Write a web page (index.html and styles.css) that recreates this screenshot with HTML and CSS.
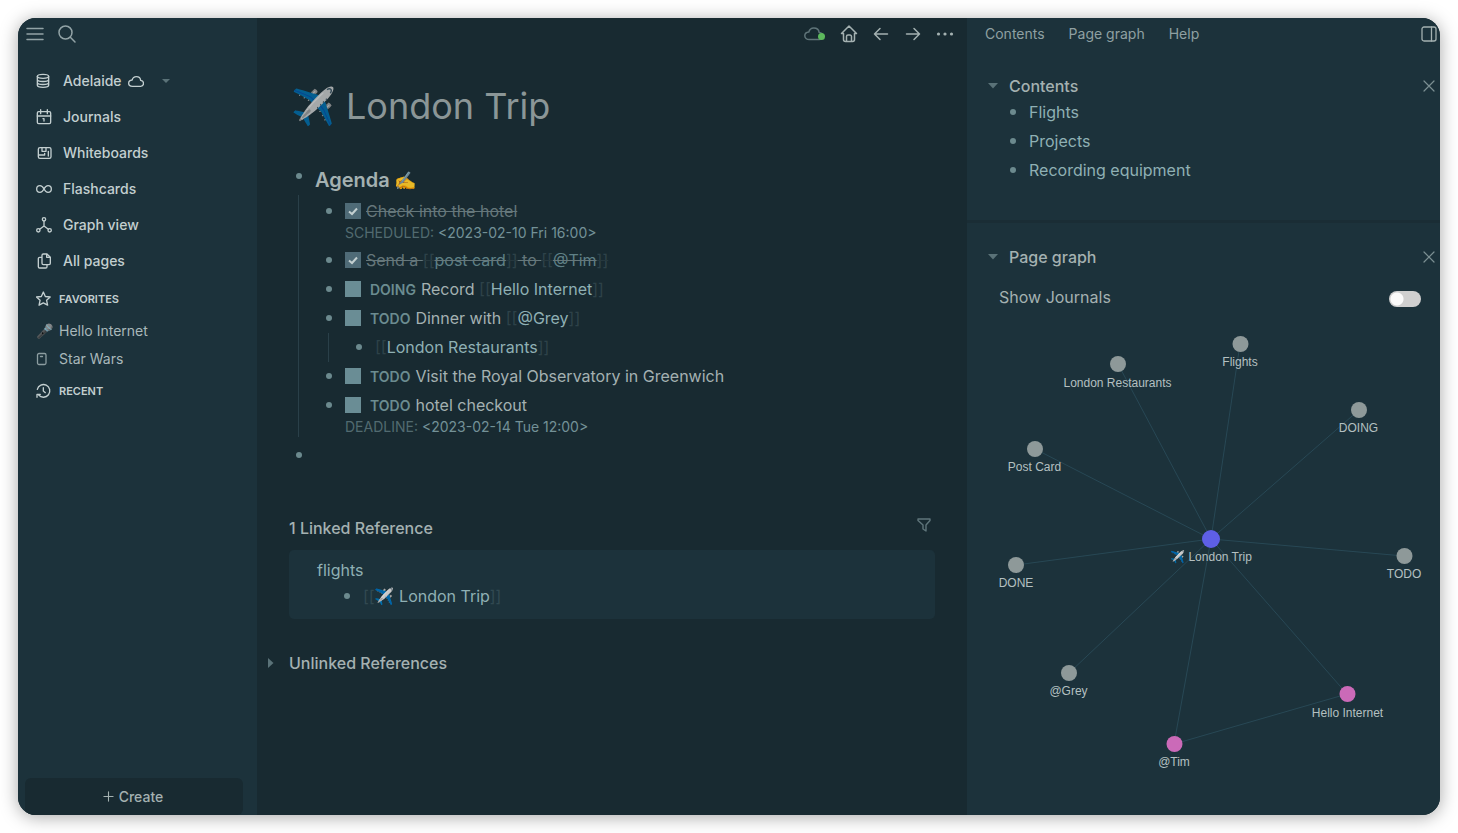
FILE: index.html
```html
<!DOCTYPE html>
<html lang="en">
<head>
<meta charset="utf-8">
<title>London Trip</title>
<meta name="viewport" content="width=device-width, initial-scale=1">
<link rel="stylesheet" href="styles.css">
</head>
<body>
<div class="window">
  <aside class="sidebar">
    <div class="sidebar-tools">
      <button class="icon-btn" aria-label="Toggle sidebar"><svg class="icon icon-lg" viewBox="0 0 20 20"><path d="M2 4.500h16M2 10h16M2 15.500h16"/></svg></button>
      <button class="icon-btn" aria-label="Search"><svg class="icon icon-lg" viewBox="0 0 20 20"><circle cx="8.500" cy="8.500" r="6.500"/><path d="M13.300 13.300 18 18"/></svg></button>
    </div>
    <nav class="nav">
      <button class="nav-item"><svg class="icon" viewBox="0 0 24 24"><ellipse cx="10.500" cy="5" rx="8.500" ry="3"/><path d="M2 5v13.500c0 1.700 3.800 3 8.500 3s8.500-1.300 8.500-3V5M2 9.700c0 1.700 3.800 3 8.500 3s8.500-1.300 8.500-3M2 14.300c0 1.700 3.800 3 8.500 3s8.500-1.300 8.500-3"/></svg>
        <span class="graph-name">Adelaide <svg class="icon" viewBox="0 0 24 24"><path d="M6.700 20C3.500 20 1 18 1 15.300S3.200 10.800 6.200 10.500C7 7.500 9.500 5.500 12.500 5.500c3.500 0 6.200 2.300 6.500 5.500 2.500.2 4.300 2.200 4.300 4.500S21.500 20 19 20z"/></svg></span>
        <svg class="caret nav-caret" viewBox="0 0 10 6"><path d="M1 1h8L5 5z"/></svg></button>
      <a class="nav-item" href="#journals"><svg class="icon" viewBox="0 0 24 24"><rect x="2" y="4" width="20" height="18" rx="2"/><path d="M7 1v6M17 1v6M2 10.500h20M10.500 14.500h1.500v3.500"/></svg>Journals</a>
      <a class="nav-item" href="#whiteboards"><svg class="icon" viewBox="0 0 24 24"><path d="M6 4h14a2.500 2.500 0 0 1 2.500 2.500v11A2.500 2.500 0 0 1 20 20H6a2.500 2.500 0 0 1-2.500-2.500v-11A2.500 2.500 0 0 1 6 4zM9 4v5.500h6V4M18.500 9.500v7M4 15h9v-2.500"/></svg>Whiteboards</a>
      <a class="nav-item" href="#flashcards"><svg class="icon" viewBox="0 0 24 24"><path d="M12 12c-1.800-3.500-3.800-5-6-5a5 5 0 0 0 0 10c2.200 0 4.200-1.500 6-5s3.800-5 6-5a5 5 0 0 1 0 10c-2.200 0-4.200-1.500-6-5z"/></svg>Flashcards</a>
      <a class="nav-item" href="#graph"><svg class="icon" viewBox="0 0 24 24"><circle cx="12" cy="3.500" r="2.500"/><circle cx="3.500" cy="20" r="2.500"/><circle cx="20.500" cy="20" r="2.500"/><path d="M12 6v7.500M12 13.500 5.500 18.500M12 13.500l6.500 5"/></svg>Graph view</a>
      <a class="nav-item" href="#pages"><svg class="icon" viewBox="0 0 24 24"><path d="M16 1.500v5h5.500M19 17.500H11a2 2 0 0 1-2-2v-12a2 2 0 0 1 2-2h5.500l5 5V15.500a2 2 0 0 1-2 2zM16.500 17.500v3a2 2 0 0 1-2 2h-9a2 2 0 0 1-2-2v-12a2 2 0 0 1 2-2H9"/></svg>All pages</a>
    </nav>
    <h2 class="side-head"><svg class="icon" viewBox="0 0 24 24"><path d="m11 1.500 3 6.700 7.300.8-5.400 5 1.500 7.300L11 17.700l-6.400 3.600L6.100 14 .7 9l7.300-.8z"/></svg>FAVORITES</h2>
    <ul class="favorites">
      <li><a href="#hello"><span class="fav-icon">🎤</span>Hello Internet</a></li>
      <li><a href="#starwars"><span class="fav-icon"><svg class="icon icon-page" viewBox="0 0 16 16"><rect x="1.500" y="2.500" width="8.500" height="11" rx="1.500"/><path d="M4.500 5.500h2"/></svg></span>Star Wars</a></li>
    </ul>
    <h2 class="side-head"><svg class="icon" viewBox="0 0 24 24"><path d="M2 9.500a9.500 9.500 0 1 1 2 8.500M1.500 21.500V17h5M11 7v5l3 2.500"/></svg>RECENT</h2>
    <button class="create"><svg class="icon icon-plus" viewBox="0 0 12 12"><path d="M6 1v10M1 6h10"/></svg>Create</button>
  </aside>

  <main class="main">
    <div class="toolbar">
      <button class="icon-btn sync" aria-label="Sync"><svg class="icon icon-sync" viewBox="0 0 20 20"><path d="M5.300 15.500C2.600 15.500.800 14 .800 11.800S2.500 8.200 4.800 8C5.500 5.500 7.300 4 9.800 4c2.900 0 5 1.800 5.300 4.400 2 .2 3.600 1.600 3.600 3.600s-1.600 3.500-3.700 3.500z"/></svg><span class="sync-dot"></span></button>
      <button class="icon-btn" aria-label="Home"><svg class="icon icon-lg" viewBox="0 0 20 20"><path d="M4.500 9.500H2.500L10 2l7.500 7.500h-2M4.500 9.500v6a2 2 0 0 0 2 2h7a2 2 0 0 0 2-2v-6M7.500 17.300V12.500a1.500 1.500 0 0 1 1.500-1.500h2a1.500 1.500 0 0 1 1.500 1.500v4.800"/></svg></button>
      <button class="icon-btn" aria-label="Back"><svg class="icon icon-lg" viewBox="0 0 20 20"><path d="M3.500 10h13M9 4.500 3.500 10 9 15.500"/></svg></button>
      <button class="icon-btn" aria-label="Forward"><svg class="icon icon-lg" viewBox="0 0 20 20"><path d="M3.500 10h13M11 4.500l5.500 5.500-5.500 5.500"/></svg></button>
      <button class="icon-btn" aria-label="More"><svg class="icon icon-lg icon-dots" viewBox="0 0 20 20"><circle cx="3.500" cy="10" r="1.600"/><circle cx="10" cy="10" r="1.600"/><circle cx="16.500" cy="10" r="1.600"/></svg></button>
    </div>
    <article class="page">
      <h1 class="title">✈️ London Trip</h1>
      <ul class="blocks">
        <li>
          <div class="row row-head"><span class="dot"></span><h2 class="agenda">Agenda <span class="agenda-emoji">✍️</span></h2></div>
          <ul class="children children-top">
            <li><div class="row"><span class="dot"></span><div class="content"><label class="task"><input type="checkbox" class="check" checked><del>Check into the hotel</del></label><div class="stamp"><span>SCHEDULED:</span> &lt;2023-02-10 Fri 16:00&gt;</div></div></div></li>
            <li><div class="row"><span class="dot"></span><div class="content task"><input type="checkbox" class="check" aria-label="Send a post card to Tim" checked><del>Send a <i class="br">[[</i><a href="#card">post card</a><i class="br">]]</i> to <i class="br">[[</i><a href="#tim">@Tim</a><i class="br">]]</i></del></div></div></li>
            <li><div class="row"><span class="dot"></span><div class="content task"><input type="checkbox" class="check" aria-label="Record Hello Internet"><span><b class="marker">DOING</b>Record <i class="br">[[</i><a href="#hello">Hello Internet</a><i class="br">]]</i></span></div></div></li>
            <li><div class="row"><span class="dot"></span><div class="content task"><input type="checkbox" class="check" aria-label="Dinner with Grey"><span><b class="marker">TODO</b>Dinner with <i class="br">[[</i><a href="#grey">@Grey</a><i class="br">]]</i></span></div></div>
              <ul class="children"><li><div class="row"><span class="dot"></span><div class="content"><i class="br">[[</i><a href="#restaurants">London Restaurants</a><i class="br">]]</i></div></div></li></ul></li>
            <li><div class="row"><span class="dot"></span><div class="content"><label class="task"><input type="checkbox" class="check"><span><b class="marker">TODO</b>Visit the Royal Observatory in Greenwich</span></label></div></div></li>
            <li><div class="row row-last"><span class="dot"></span><div class="content"><label class="task"><input type="checkbox" class="check"><span><b class="marker">TODO</b>hotel checkout</span></label><div class="stamp"><span>DEADLINE:</span> &lt;2023-02-14 Tue 12:00&gt;</div></div></div></li>
          </ul>
        </li>
        <li><div class="row row-empty"><span class="dot"></span><div class="content"></div></div></li>
      </ul>
      <section class="linked">
        <div class="section-head"><h2 class="section-title">1 Linked Reference</h2><button class="icon-btn filter" aria-label="Filter"><svg class="icon" viewBox="0 0 16 16"><path d="M2 2h12v1.500L10 8v6l-3-2V8L2 3.500z"/></svg></button></div>
        <div class="ref-card">
          <a class="ref-page" href="#flights">flights</a>
          <div class="row row-ref"><span class="dot"></span><div class="content"><i class="br">[[</i><a href="#london">✈️ London Trip</a><i class="br">]]</i></div></div>
        </div>
      </section>
      <button class="unlinked"><svg class="caret caret-right" viewBox="0 0 6 10"><path d="M0 0v10l5.500-5z"/></svg>Unlinked References</button>
    </article>
  </main>

  <aside class="right">
    <div class="tabs">
      <button class="tab">Contents</button><button class="tab">Page graph</button><button class="tab">Help</button>
      <button class="icon-btn panel-btn" aria-label="Toggle right sidebar"><svg class="icon icon-panel" viewBox="0 0 16 16"><rect x="1" y="1" width="14" height="14" rx="2"/><path d="M10.500 1v14"/></svg></button>
    </div>
    <section class="panel panel-contents">
      <div class="panel-head"><svg class="caret" viewBox="0 0 10 6"><path d="M0 0h10L5 5.500z"/></svg><h2 class="section-title">Contents</h2><button class="icon-btn close" aria-label="Close contents"><svg class="icon icon-x" viewBox="0 0 12 12"><path d="m1 1 10 10M11 1 1 11"/></svg></button></div>
      <ul class="toc">
        <li class="row"><span class="dot"></span><a class="content" href="#flights">Flights</a></li>
        <li class="row"><span class="dot"></span><a class="content" href="#projects">Projects</a></li>
        <li class="row"><span class="dot"></span><a class="content" href="#recording">Recording equipment</a></li>
      </ul>
    </section>
    <section class="panel panel-graph">
      <div class="panel-head"><svg class="caret" viewBox="0 0 10 6"><path d="M0 0h10L5 5.500z"/></svg><h2 class="section-title">Page graph</h2><button class="icon-btn close" aria-label="Close page graph"><svg class="icon icon-x" viewBox="0 0 12 12"><path d="m1 1 10 10M11 1 1 11"/></svg></button></div>
      <label class="switch-row">Show Journals<input type="checkbox" class="switch" role="switch"></label>
      <svg class="graph" viewBox="967 317 473 498" role="img" aria-label="Page graph">
        <g class="edges"><path d="M1211 539 1118 364M1211 539 1240 344M1211 539 1359 410M1211 539 1035 449M1211 539 1016 565M1211 539 1404 556M1211 539 1069 673M1211 539 1174 744M1211 539 1347 694M1174 744 1347 694"/></g>
        <g class="nodes"><circle cx="1118" cy="364" r="8"/><circle cx="1240.500" cy="344" r="8"/><circle cx="1359" cy="410" r="8"/><circle cx="1035" cy="449" r="8"/><circle cx="1016" cy="565" r="8"/><circle cx="1404.500" cy="556" r="8"/><circle cx="1069" cy="673" r="8"/><circle class="pink" cx="1174.500" cy="744" r="8"/><circle class="pink" cx="1347.500" cy="694" r="8"/><circle class="blue" cx="1211" cy="539" r="9"/></g>
        <g class="labels"><text x="1117.500" y="387">London Restaurants</text><text x="1240" y="366">Flights</text><text x="1358.500" y="432">DOING</text><text x="1034.500" y="471">Post Card</text><text x="1016" y="587">DONE</text><text x="1404" y="578">TODO</text><text x="1068.500" y="695">@Grey</text><text x="1174" y="766">@Tim</text><text x="1347.500" y="717">Hello Internet</text><text x="1211" y="561">✈️ London Trip</text></g>
      </svg>
    </section>
  </aside>
</div>
</body>
</html>
```
FILE: styles.css
```css
:root {
  --bg-side: #1c323b;
  --bg-main: #182a31;
  --text: #a4b1b1;
  --link: #8fb0b4;
  --line: #2a4049;
}
* { box-sizing: border-box; }
body {
  margin: 0;
  padding: 18px;
  min-height: 100vh;
  display: flex;
  background: #fff;
  color: var(--text);
  font: 16px/24px Inter, "Noto Color Emoji", sans-serif;
}
h1, h2, ul { margin: 0; padding: 0; font-size: inherit; font-weight: inherit; list-style: none; }
button { margin: 0; padding: 0; border: 0; background: none; color: inherit; font: inherit; cursor: pointer; }
a { color: var(--link); text-decoration: none; }
.window {
  flex: 1;
  display: grid;
  grid-template-columns: 239px minmax(0, 1fr) 473px;
  overflow: hidden;
  border-radius: 18px;
  background: var(--bg-main);
  box-shadow: 0 2px 18px rgba(0, 0, 0, 0.35);
}
.icon { width: 16px; height: 16px; flex: none; fill: none; stroke: currentColor; stroke-width: 2; stroke-linecap: round; stroke-linejoin: round; }
.icon-lg { width: 20px; height: 20px; stroke-width: 1.5; }
.icon-btn { display: flex; align-items: center; justify-content: center; width: 32px; height: 32px; }
.caret { width: 10px; height: 6px; flex: none; fill: #5a7278; }

.sidebar { display: flex; flex-direction: column; background: var(--bg-side); color: #c3cfd0; font-size: 14px; }
.sidebar-tools { display: flex; height: 32px; padding-left: 1px; color: #92a3a6; }
.nav { display: flex; flex-direction: column; padding: 13px 18px 0; }
.nav-item { display: flex; align-items: center; gap: 11px; height: 36px; color: inherit; font-weight: 500; text-align: left; }
.graph-name { display: flex; align-items: center; gap: 6px; }
.nav-caret { margin-left: 6px; }
.side-head { display: flex; align-items: center; gap: 7px; height: 32px; margin: 4px 18px 0; font-size: 11px; font-weight: 600; }
.favorites { padding: 2px 18px 0; }
.favorites a { display: flex; align-items: center; gap: 7px; height: 28px; color: #a9b8ba; }
.fav-icon { display: flex; width: 16px; opacity: 0.8; }
.side-head + .favorites + .side-head { margin-top: 2px; }
.icon-page { stroke-width: 1.3; }
.create { display: flex; align-items: center; justify-content: center; gap: 5px; height: 37px; margin: auto 14px 0 7px; padding-right: 2px; border-radius: 6px; background: var(--bg-main); color: var(--text); font-weight: 500; }
.icon-plus { width: 11px; height: 11px; stroke-width: 1.2; }

.toolbar { display: flex; justify-content: flex-end; height: 32px; padding-right: 6px; color: #a4b1b1; }
.sync { position: relative; color: #5f7479; margin-right: 3px; }
.sync-dot { position: absolute; right: 5px; bottom: 10px; width: 7px; height: 7px; border-radius: 50%; background: #5cb85c; }
.icon-sync { width: 20px; height: 20px; stroke-width: 1.5; }
.icon-dots { fill: currentColor; stroke: none; }
.page { padding: 32px 32px 24px; }
.title { padding-left: 2px; color: #a8b2b1; font-size: 36px; line-height: 48px; opacity: 0.8; }
.blocks { padding-top: 36px; }
.row { display: flex; gap: 6px; padding: 2px 0 3px; }
.dot { display: flex; flex: none; align-items: center; justify-content: center; width: 20px; height: 24px; }
.dot::before { content: ""; width: 6px; height: 6px; border-radius: 50%; background: #6c8a8e; }
.content { min-width: 0; flex: 1; }
.row-head { padding: 0 0 1px; }
.row-head .dot { height: 20px; }
.agenda { font-size: 20px; line-height: 28px; font-weight: 600; }
.agenda-emoji { font-size: 18px; line-height: 20px; opacity: 0.9; }
.children { margin-left: 9px; padding-left: 20px; border-left: 1px solid var(--line); }
.children-top { padding-top: 2px; }
.row-last { padding-bottom: 0; }
.row-empty { padding-top: 6px; }
.task { display: flex; align-items: center; gap: 5px; }
.check { appearance: none; flex: none; width: 16px; height: 16px; margin: 0; background: #6a8d95; }
.check:checked { background: #4f6b77 url("data:image/svg+xml,%3Csvg xmlns='http://www.w3.org/2000/svg' viewBox='0 0 16 16'%3E%3Cpath d='M4 8.500 7 11l5-5.500' fill='none' stroke='%23c3cfd0' stroke-width='2'/%3E%3C/svg%3E"); }
del { color: #65777b; }
del a { color: #5f8086; }
.marker { margin: 0 5px 0 4px; color: #6b8c90; font-size: 14px; line-height: 16px; font-weight: 600; }
.br { color: var(--link); font-style: normal; opacity: 0.18; }
.stamp { color: #739197; font-size: 14px; line-height: 20px; }
.stamp span { color: #526a70; }
.linked { padding-top: 46px; }
.section-title { font-weight: 500; }
.section-head { display: flex; align-items: flex-start; justify-content: space-between; }
.filter { width: 22px; height: 18px; color: #5f757b; }
.filter .icon { stroke-width: 1.4; }
.ref-card { margin-top: 10px; padding: 8px 28px; border-radius: 5px; background: var(--bg-side); }
.ref-page { display: block; }
.row-ref { padding-left: 20px; }
.unlinked { display: flex; align-items: center; gap: 15px; margin: 32px 0 0 -21px; font-weight: 500; }
.caret-right { width: 6px; height: 10px; }

.right { display: flex; flex-direction: column; background: var(--bg-side); }
.tabs { display: flex; align-items: center; gap: 24px; height: 32px; padding-left: 18px; font-size: 14px; color: #8fa0a2; }
.panel-btn { width: 22px; margin-left: auto; color: #a4b1b1; }
.icon-panel { stroke-width: 1.3; }
.panel-head { display: flex; align-items: center; gap: 11px; padding-left: 21px; }
.close { width: 22px; height: 24px; margin-left: auto; color: #7b8f92; }
.icon-x { width: 12px; height: 12px; stroke-width: 1.2; }
.panel-contents { padding: 24px 0 35px; border-bottom: 3px solid #1a2d35; }
.toc { padding-left: 36px; }
.panel-graph { padding-top: 22px; }
.switch-row { display: flex; align-items: center; justify-content: space-between; padding: 16px 19px 0 32px; }
.switch { appearance: none; width: 32px; height: 16px; margin: 4px 0 0; border-radius: 8px; background: radial-gradient(circle at 8px 8px, #fafafa 6px, #cfcfcf 7px); }
.graph { display: block; width: 100%; height: auto; margin-top: 8px; }
.edges { fill: none; stroke: #284855; stroke-width: 1; }
.nodes { fill: #8e9999; }
.pink { fill: #cb6ab8; }
.blue { fill: #5e5fe6; }
.labels { fill: #b4c0c1; font: 12px "Liberation Sans", Arial, "Noto Color Emoji", sans-serif; text-anchor: middle; }
```
